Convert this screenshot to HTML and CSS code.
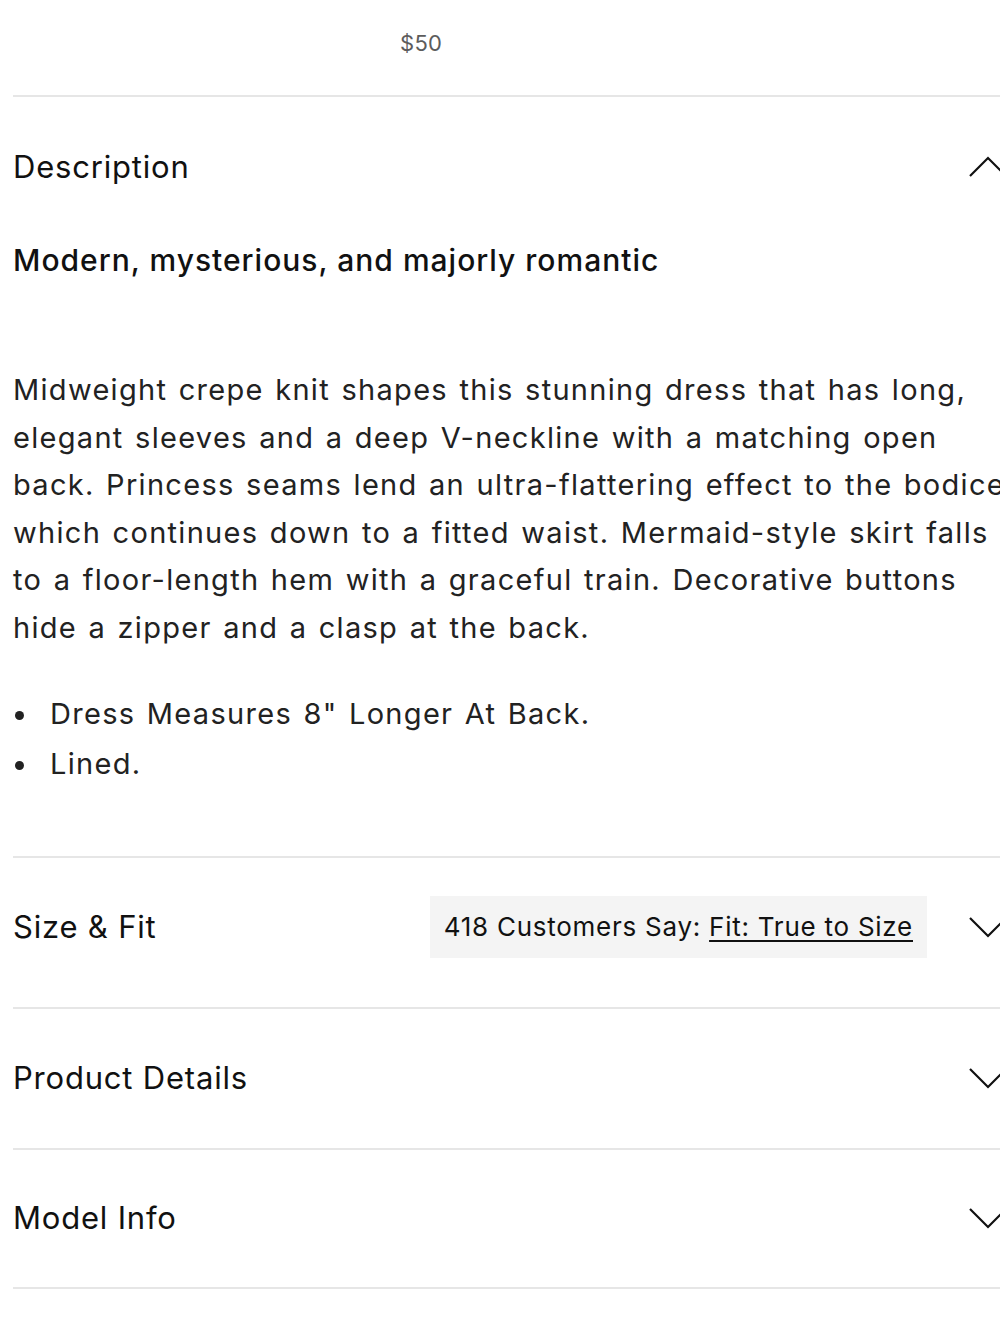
FILE: index.html
```html
<!DOCTYPE html>
<html lang="en">
<head>
<meta charset="utf-8">
<title>Product</title>
<link rel="stylesheet" href="styles.css">
</head>
<body>
<div class="page">
  <div class="price">$50</div>

  <section class="section desc">
    <div class="row head">
      <h2 class="title">Description</h2>
      <svg class="chev" width="38" height="22" viewBox="0 0 38 22"><path d="M1 20 L19 2 L37 20" fill="none" stroke="#111" stroke-width="2.2"/></svg>
    </div>
    <p class="subtitle">Modern, mysterious, and majorly romantic</p>
    <p class="body"><span class="ln">Midweight crepe knit shapes this stunning dress that has long,</span> <span class="ln">elegant sleeves and a deep V-neckline with a matching open</span> <span class="ln">back. Princess seams lend an ultra-flattering effect to the bodice,</span> <span class="ln">which continues down to a fitted waist. Mermaid-style skirt falls</span> <span class="ln">to a floor-length hem with a graceful train. Decorative buttons</span> <span class="ln">hide a zipper and a clasp at the back.</span></p>
    <ul class="bullets">
      <li>Dress Measures 8" Longer At Back.</li>
      <li>Lined.</li>
    </ul>
  </section>

  <section class="section row size">
    <h2 class="title grow">Size &amp; Fit</h2>
    <div class="badge">418 Customers Say: <span class="link">Fit: True to Size</span></div>
    <svg class="chev" width="38" height="22" viewBox="0 0 38 22"><path d="M1 2 L19 20 L37 2" fill="none" stroke="#111" stroke-width="2.2"/></svg>
  </section>

  <section class="section row plain">
    <h2 class="title grow">Product Details</h2>
    <svg class="chev" width="38" height="22" viewBox="0 0 38 22"><path d="M1 2 L19 20 L37 2" fill="none" stroke="#111" stroke-width="2.2"/></svg>
  </section>

  <section class="section row plain last">
    <h2 class="title grow">Model Info</h2>
    <svg class="chev" width="38" height="22" viewBox="0 0 38 22"><path d="M1 2 L19 20 L37 2" fill="none" stroke="#111" stroke-width="2.2"/></svg>
  </section>
</div>
</body>
</html>
```

FILE: styles.css
```css
html, body {
  margin: 0;
  padding: 0;
  background: #fff;
  overflow: hidden;
}
body {
  font-family: Inter, "Noto Sans", sans-serif;
  color: #1c1c1c;
}
.page {
  margin-left: 13px;
  width: 1000px;
}
.price {
  height: 95px;
  box-sizing: border-box;
  padding-top: 29px;
  padding-left: 387px;
  font-size: 22px;
  line-height: 28px;
  letter-spacing: 0.3px;
  color: #5c5c5c;
}
.section {
  border-top: 2px solid #e6e6e6;
}
.row {
  display: flex;
  align-items: center;
}
.head {
  height: 140px;
  justify-content: space-between;
}
.title {
  margin: 0;
  font-size: 31px;
  font-weight: 400;
  line-height: 40px;
  letter-spacing: 0.8px;
  color: #111;
}
.grow { flex: 1; }
.chev {
  flex: none;
  margin-right: 6px;
  margin-left: 42px;
}
.subtitle {
  margin: 0;
  font-size: 30px;
  font-weight: 500;
  line-height: 46px;
  letter-spacing: 1px;
  color: #111;
}
.body {
  margin: 83px 0 0;
  font-size: 29px;
  line-height: 47.6px;
  letter-spacing: 1.3px;
  word-spacing: 2px;
  color: #222;
}
.ln {
  display: block;
  white-space: nowrap;
}
.bullets {
  margin: 37px 0 0;
  padding: 0;
  list-style: none;
  font-size: 29px;
  line-height: 50px;
  letter-spacing: 1.3px;
  word-spacing: 2px;
  color: #222;
}
.bullets li {
  position: relative;
  padding-left: 37px;
}
.bullets li::before {
  content: "";
  position: absolute;
  left: 2px;
  top: 22px;
  width: 9px;
  height: 9px;
  border-radius: 50%;
  background: #222;
}
.desc { padding-bottom: 67px; }
.size {
  padding: 38px 0 49px;
}
.badge {
  background: #f4f4f4;
  padding: 0 14px;
  height: 62px;
  display: flex;
  align-items: center;
  font-size: 26px;
  letter-spacing: 0.75px;
  color: #111;
  white-space: nowrap;
}
.link {
  text-decoration: underline;
  text-underline-offset: 4px;
  margin-left: 8px;
}
.plain {
  height: 139px;
}
.last {
  border-bottom: 2px solid #e6e6e6;
  height: 137px;
}
```
